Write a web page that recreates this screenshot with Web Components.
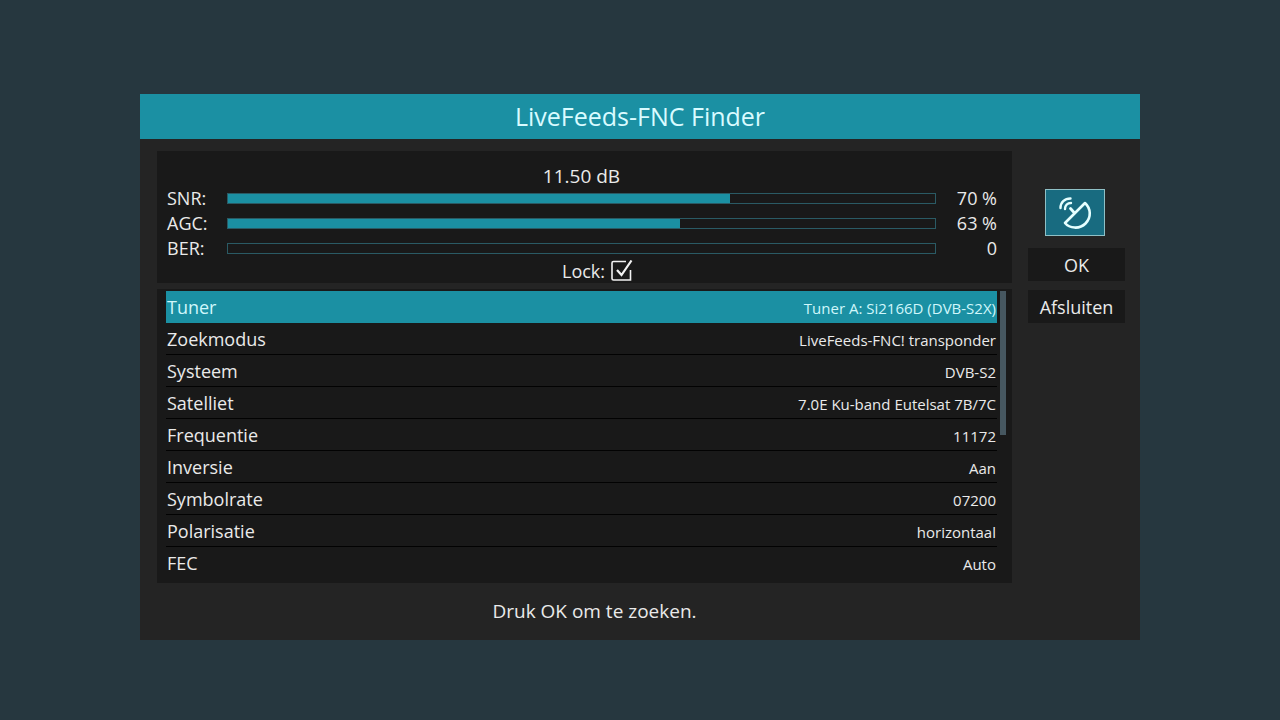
<!DOCTYPE html>
<html lang="nl">
<head>
<meta charset="utf-8">
<title>LiveFeeds-FNC Finder</title>
<style>
  body {
    margin: 0;
    min-height: 100vh;
    box-sizing: border-box;
    padding: 94px 16px 80px;
    background: #26373f;
    color: #eaeaea;
    font: 19px/20px "Open Sans", "Noto Sans", sans-serif;
  }
</style>
</head>
<body>
<finder-dialog>
  <span slot="title">LiveFeeds-FNC Finder</span>
  <signal-panel level="11.50 dB">
    <signal-meter label="SNR:" value="71" text="70 %"></signal-meter>
    <signal-meter label="AGC:" value="64" text="63 %"></signal-meter>
    <signal-meter label="BER:" value="0" text="0"></signal-meter>
  </signal-panel>
  <settings-list></settings-list>
  <dish-icon slot="actions"></dish-icon>
  <action-button slot="actions">OK</action-button>
  <action-button slot="actions">Afsluiten</action-button>
  <span slot="hint">Druk OK om te zoeken.</span>
</finder-dialog>

<script>
class BaseElement extends HTMLElement {
  connectedCallback() {
    if (!this.shadowRoot) this.attachShadow({ mode: "open" }).innerHTML = this.render();
  }
}

customElements.define("finder-dialog", class extends BaseElement {
  render() {
    return `
    <style>
      :host { display: block; max-width: 1000px; margin: 0 auto; background: #242424; }
      header { background: #1b90a3; color: #d9fbff; text-align: center; }
      h1 { margin: 0; padding-bottom: 1px; font-size: 25px; line-height: 44px; font-weight: 400; }
      .body { display: grid; grid-template-columns: minmax(0, 1fr) 97px; column-gap: 16px; padding: 12px 15px 0 17px; }
      main { display: grid; gap: 6px; }
      aside { display: flex; flex-direction: column; gap: 9px; padding-top: 38px; }
      footer { padding: 18px 108px 19px 17px; text-align: center; }
    </style>
    <header><h1><slot name="title"></slot></h1></header>
    <div class="body">
      <main><slot></slot></main>
      <aside><slot name="actions"></slot></aside>
    </div>
    <footer><slot name="hint"></slot></footer>`;
  }
});

customElements.define("signal-panel", class extends BaseElement {
  render() {
    return `
    <style>
      :host { display: block; background: #191919; padding: 15px 15px 2px 10px; }
      .level { padding: 0 61px 0 60px; text-align: center; }
      .lock { display: flex; justify-content: center; align-items: center; gap: 6px; padding-left: 31px; font-size: 18px; }
      .box { display: grid; width: 22px; height: 22px; margin: -1px 0; }
      input, svg { grid-area: 1 / 1; width: 22px; height: 22px; margin: 0; }
      input { appearance: none; }
      svg { pointer-events: none; fill: none; stroke: #f2f2f2; }
      svg .tick { visibility: hidden; }
      input:checked + svg .tick { visibility: visible; }
    </style>
    <div class="level">${this.getAttribute("level")}</div>
    <slot></slot>
    <div class="lock">
      <label for="lock">Lock:</label>
      <span class="box">
        <input id="lock" type="checkbox" checked>
        <svg viewBox="0 0 22 22" aria-hidden="true">
          <path d="M15 1.500H2.500Q1 1.500 1 3V18.500Q1 20 2.500 20H19.500V10" stroke-width="1.600"/>
          <path class="tick" d="M6 10L10.500 15L20.500 0.500" stroke-width="2.200"/>
        </svg>
      </span>
    </div>`;
  }
});

customElements.define("signal-meter", class extends BaseElement {
  render() {
    const value = this.getAttribute("value");
    return `
    <style>
      :host { display: grid; grid-template-columns: 60px minmax(0, 1fr) 61px; align-items: center; line-height: 25px; font-size: 18px; }
      .track { box-sizing: border-box; height: 11px; border: 1px solid #2a5a64; }
      .fill { height: 9px; width: ${value}%; background: #1b90a3; }
      output { text-align: right; }
    </style>
    <span id="name">${this.getAttribute("label")}</span>
    <div class="track" role="meter" aria-labelledby="name" aria-valuemin="0" aria-valuemax="100" aria-valuenow="${value}"><div class="fill"></div></div>
    <output>${this.getAttribute("text")}</output>`;
  }
});

customElements.define("settings-list", class extends BaseElement {
  render() {
    const rows = [
      ["Tuner", "Tuner A: Si2166D (DVB-S2X)"],
      ["Zoekmodus", "LiveFeeds-FNC! transponder"],
      ["Systeem", "DVB-S2"],
      ["Satelliet", "7.0E Ku-band Eutelsat 7B/7C"],
      ["Frequentie", "11172"],
      ["Inversie", "Aan"],
      ["Symbolrate", "07200"],
      ["Polarisatie", "horizontaal"],
      ["FEC", "Auto"]
    ];
    return `
    <style>
      :host { display: grid; grid-template-columns: minmax(0, 1fr) 6px; column-gap: 3px; background: #191919; padding: 2px 6px 4px 9px; }
      table { width: 100%; border-collapse: separate; border-spacing: 0; }
      th, td { box-sizing: border-box; height: 32px; padding: 0 1px; border-bottom: 1px solid #020202; }
      th { text-align: left; font-weight: 400; font-size: 18px; }
      td { text-align: right; font-size: 15px; padding-top: 2px; }
      tr:last-child > * { border-bottom-color: transparent; }
      .selected > * { background: #1b90a3; border-bottom-color: #1b90a3; color: #d0f7fb; }
      .scroll { height: 50%; background: #465760; }
    </style>
    <table>${rows.map(([name, value], i) => `<tr${i ? "" : ' class="selected"'}><th scope="row">${name}</th><td>${value}</td></tr>`).join("")}</table>
    <div class="scroll"></div>`;
  }
});

customElements.define("dish-icon", class extends BaseElement {
  render() {
    return `
    <style>
      :host { display: block; box-sizing: border-box; width: 60px; height: 47px; margin: 0 0 3px 17px; border: 1px solid #8fc0c6; background: #186b80; }
      svg { display: block; width: 58px; height: 45px; fill: none; stroke: #e6ffff; stroke-linecap: round; stroke-linejoin: round; }
    </style>
    <svg viewBox="1 1 58 45" role="img" aria-label="Schotelantenne">
      <path d="M40 14L20 34C24.500 39.500 34.500 40.500 40.500 34.500C46.500 28.500 46 19.500 40 14Z" stroke-width="2.600"/>
      <path d="M29.500 24L25.500 19.500" stroke-width="2.800"/>
      <path d="M15.500 19C15.500 13.500 19.500 9.500 25.500 9.500M20 20C20 16.500 22.500 14 26 14" stroke-width="2.400"/>
    </svg>`;
  }
});

customElements.define("action-button", class extends BaseElement {
  render() {
    return `
    <style>
      :host { display: block; }
      button { display: block; width: 100%; height: 33px; padding: 0; border: 0; background: #191919; color: inherit; font: inherit; font-size: 18px; }
    </style>
    <button type="button"><slot></slot></button>`;
  }
});
</script>
</body>
</html>
